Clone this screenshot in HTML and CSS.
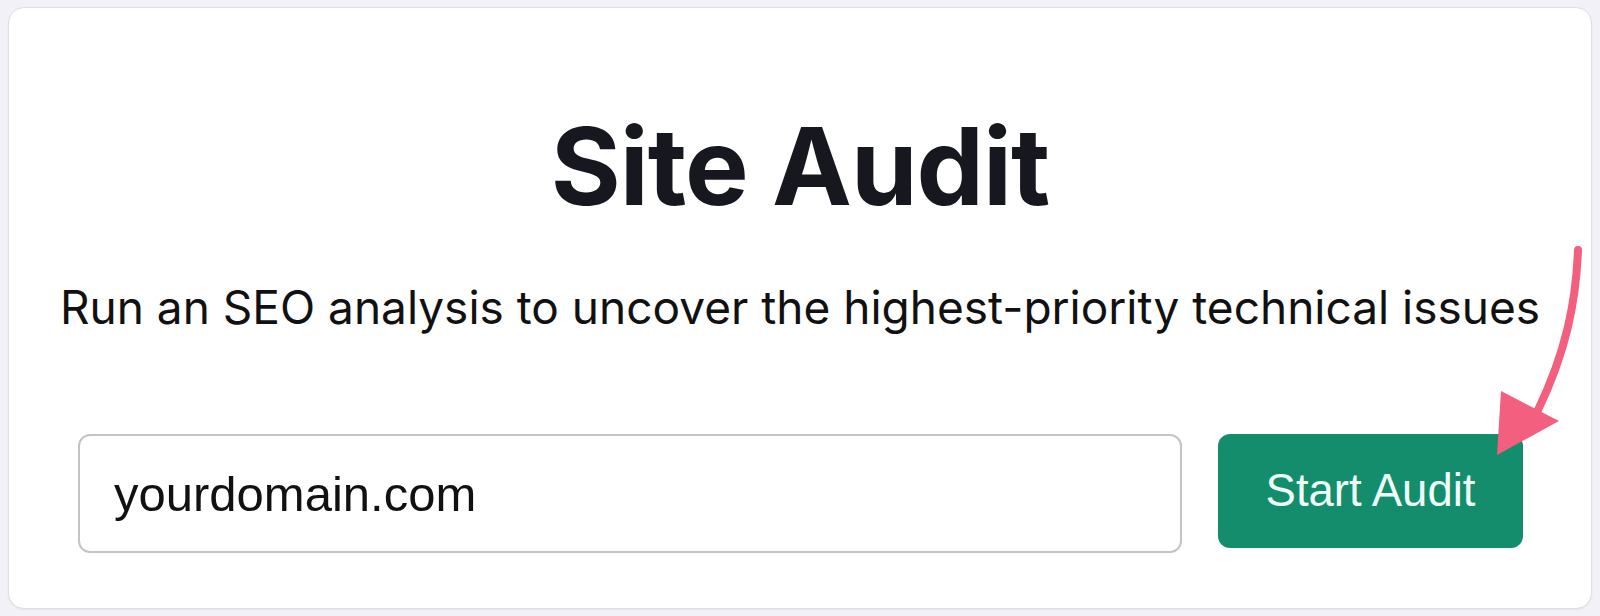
FILE: index.html
```html
<!DOCTYPE html>
<html lang="en">
<head>
  <meta charset="UTF-8">
  <meta name="viewport" content="width=device-width, initial-scale=1.0">
  <title>Site Audit</title>

  <link rel="stylesheet" href="styles.css">
</head>

<body>

<div class="card">
  <h1 class="title">Site Audit</h1>
  <p class="subtitle">Run an SEO analysis to uncover the highest-priority technical issues</p>

  <div class="audit-form">
    <input type="text" class="domain-input" value="yourdomain.com">
    <button class="start-button">Start Audit</button>
  </div>

  <svg class="arrow" viewBox="0 0 120 240" width="120" height="240">
    <path d="M98,20 C96,72 86,122 58,180" fill="none" stroke="#f35f7e" stroke-width="8" stroke-linecap="round"/>
    <polygon points="21,161 79,191 17,225" fill="#f35f7e"/>
  </svg>
</div>

</body>
</html>
```

FILE: styles.css
```css
body {
  margin: 0;
  padding: 7px 8px;
  background-color: #f1f1f7;
}

.card {
  position: relative;
  height: 602px;
  box-sizing: border-box;
  background-color: #fff;
  border: 1px solid #dedee6;
  border-radius: 16px;
  box-shadow: 0 1px 2px rgba(0, 0, 0, 0.06);
  padding-top: 94px;
  display: flex;
  flex-direction: column;
  align-items: center;
}

.title {
  margin: 0;
  font-family: Inter, "Noto Sans", sans-serif;
  font-weight: 700;
  font-size: 107px;
  line-height: 128px;
  letter-spacing: -1px;
  color: #17181f;
}

.subtitle {
  margin: 50px 0 0;
  font-family: Inter, "Noto Sans", sans-serif;
  font-size: 46px;
  line-height: 54px;
  color: #111;
}

.audit-form {
  align-self: stretch;
  display: flex;
  align-items: flex-start;
  gap: 36px;
  margin-top: 100px;
  padding: 0 68px 0 69px;
}

.domain-input {
  flex: 1;
  height: 119px;
  box-sizing: border-box;
  padding: 0 34px;
  font-family: "Liberation Sans", Arial, sans-serif;
  font-size: 49px;
  color: #111;
  border: 2px solid #c4c4c8;
  border-radius: 12px;
  outline: none;
}

.start-button {
  width: 305px;
  height: 114px;
  font-family: "Liberation Sans", Arial, sans-serif;
  font-size: 45.5px;
  color: #effff8;
  background-color: #148d6d;
  border: none;
  border-radius: 12px;
  cursor: pointer;
}

.arrow {
  position: absolute;
  left: 1471px;
  top: 222px;
}
```
